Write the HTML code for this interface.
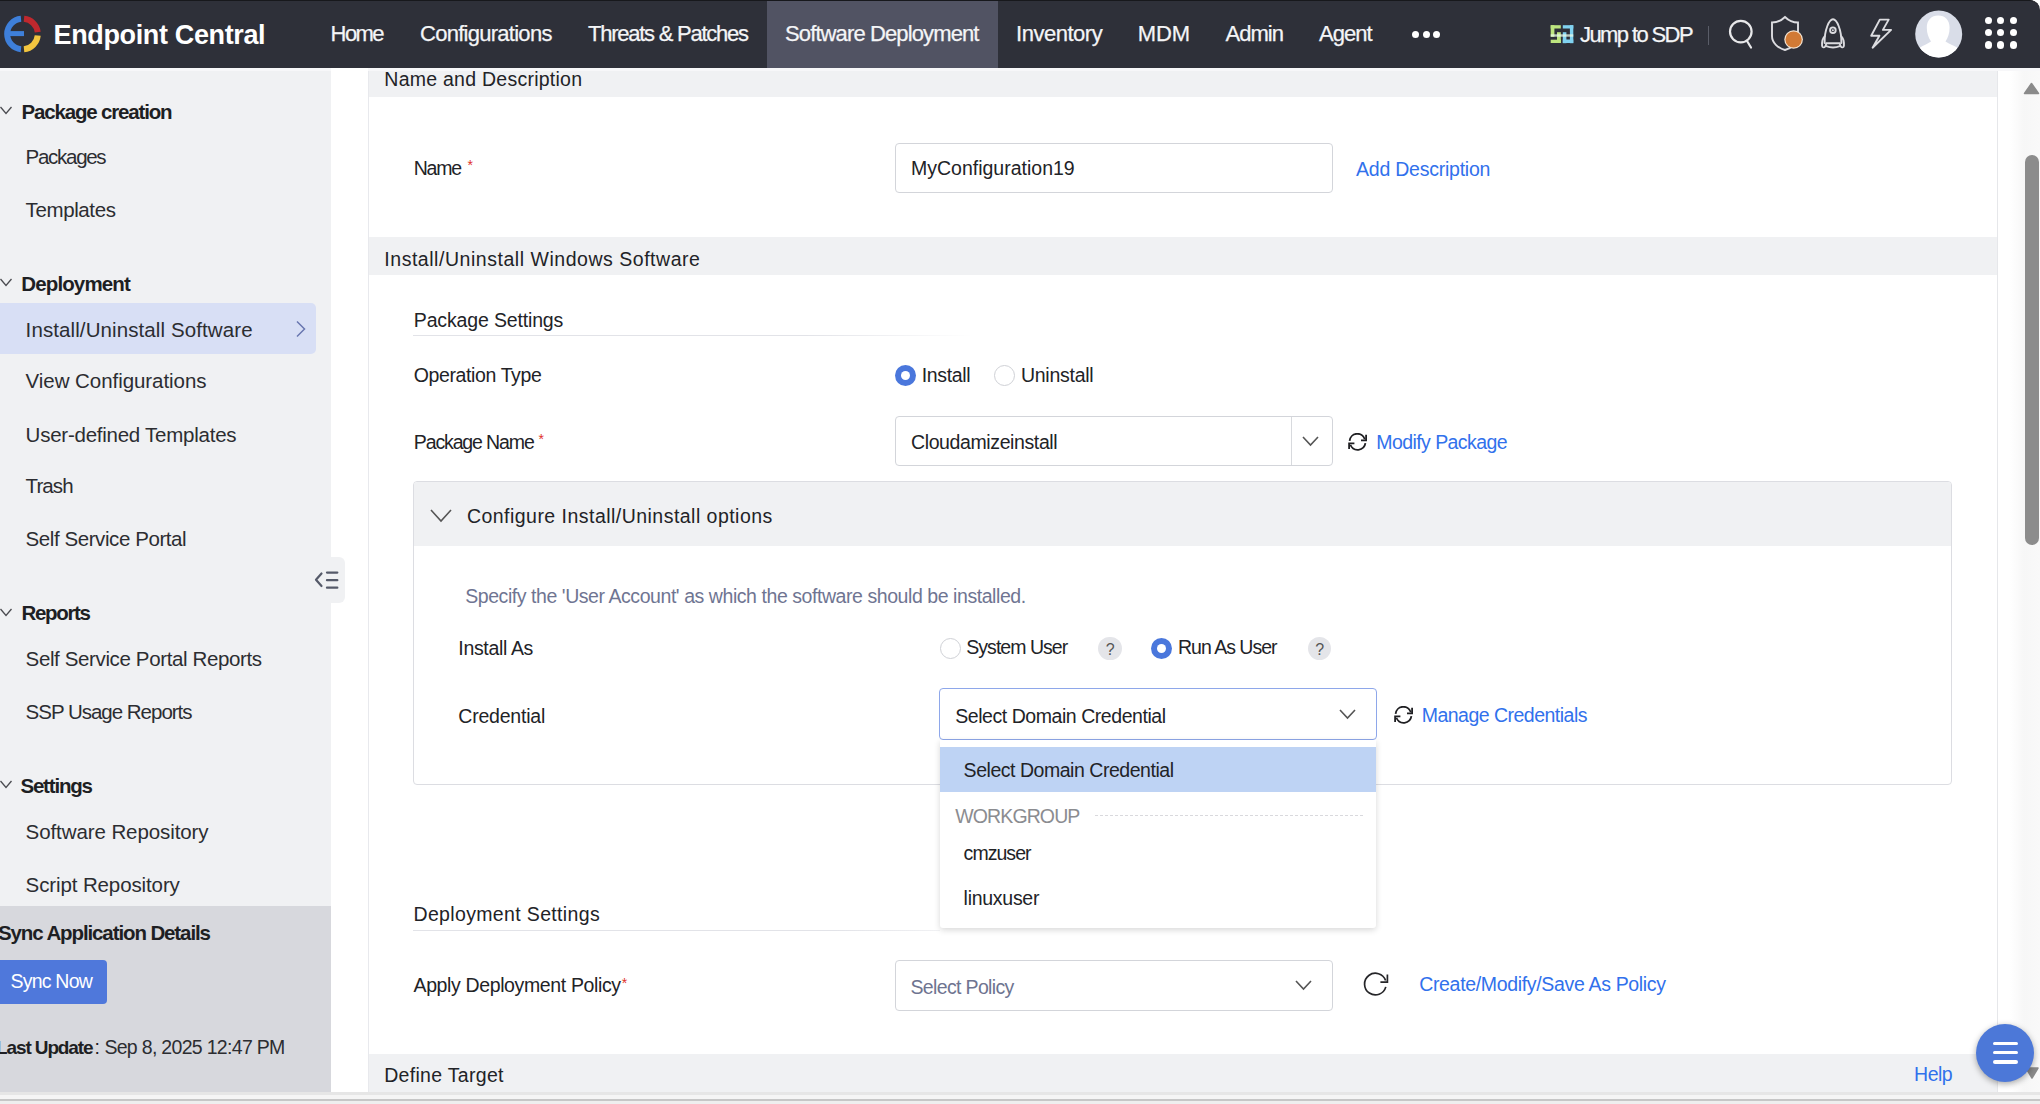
<!DOCTYPE html>
<html><head><meta charset="utf-8">
<style>
*{margin:0;padding:0;box-sizing:border-box}
html,body{width:2040px;height:1104px;overflow:hidden;background:#fff;font-family:"Liberation Sans",sans-serif;color:#222}
.t{position:absolute;white-space:nowrap;line-height:1.117}
.b{position:absolute}
</style></head><body>
<div class="b" style="left:0px;top:69px;width:331px;height:837px;background:#f0f1f3"></div>
<div class="b" style="left:0px;top:906px;width:331px;height:186px;background:#d7d8dd"></div>
<div class="b" style="left:368px;top:69px;width:1px;height:1023px;background:#e8e9ed"></div>
<div class="b" style="left:1997px;top:69px;width:1px;height:1023px;background:#e6e7ea"></div>
<div class="b" style="left:1998px;top:69px;width:42px;height:1023px;background:linear-gradient(90deg,#fff 0,#fff 12px,#f7f7f7 26px,#f9f9f9 100%)"></div>
<div class="b" style="left:369px;top:69px;width:1628px;height:28px;background:#f0f1f3"></div>
<div class="b" style="left:369px;top:237px;width:1628px;height:38px;background:#f0f1f3"></div>
<div class="b" style="left:369px;top:1054px;width:1628px;height:38px;background:#f0f1f3"></div>
<div class="b" style="left:0px;top:1092px;width:2040px;height:3px;background:#e6e6e6"></div>
<div class="b" style="left:0px;top:1095px;width:2040px;height:4px;background:#f5f5f5"></div>
<div class="b" style="left:0px;top:1099px;width:2040px;height:2px;background:#c6c6c6"></div>
<div class="b" style="left:0px;top:1101px;width:2040px;height:3px;background:#eeeeee"></div>
<div class="b" style="left:0px;top:0px;width:2040px;height:68px;background:#2e3039;border-top:1px solid #17181c;border-top-right-radius:10px"></div>
<div class="b" style="left:0px;top:68px;width:2040px;height:3px;background:#f7f7f9"></div>
<div class="b" style="left:331px;top:68px;width:37px;height:3px;background:#fff"></div>
<div class="b" style="left:767px;top:1px;width:231px;height:67px;background:#515363"></div>
<svg class="b" style="left:0;top:0" width="60" height="69" viewBox="0 0 60 69">
<g fill="none" stroke-width="6" stroke-linecap="butt">
<path d="M21 18.77 A15.3 15.3 0 0 0 21 49.23" stroke="#3e7fda"/>
<path d="M24 18.77 A15.3 15.3 0 0 1 37.73 32.2" stroke="#bf282e"/>
<path d="M37.73 35.5 A15.3 15.3 0 0 1 24 49.23" stroke="#f2c53f"/>
<path d="M10 33.6 H24" stroke="#3e7fda" stroke-width="5"/>
</g></svg>
<div class="t" style="left:53.60px;top:20.06px;font-size:27px;color:#ffffff;font-weight:bold;letter-spacing:-0.367px;">Endpoint Central</div>
<div class="t" style="left:330.60px;top:21.59px;font-size:22px;color:#f4f5f7;letter-spacing:-1.583px;-webkit-text-stroke:0.25px #f4f5f7;">Home</div>
<div class="t" style="left:420.00px;top:21.59px;font-size:22px;color:#f4f5f7;letter-spacing:-0.729px;-webkit-text-stroke:0.25px #f4f5f7;">Configurations</div>
<div class="t" style="left:588.00px;top:21.59px;font-size:22px;color:#f4f5f7;letter-spacing:-1.250px;-webkit-text-stroke:0.25px #f4f5f7;">Threats &amp; Patches</div>
<div class="t" style="left:785.00px;top:21.59px;font-size:22px;color:#f4f5f7;letter-spacing:-0.882px;-webkit-text-stroke:0.25px #f4f5f7;">Software Deployment</div>
<div class="t" style="left:1016.00px;top:21.59px;font-size:22px;color:#f4f5f7;letter-spacing:-0.475px;-webkit-text-stroke:0.25px #f4f5f7;">Inventory</div>
<div class="t" style="left:1137.70px;top:21.59px;font-size:22px;color:#f4f5f7;letter-spacing:-0.100px;-webkit-text-stroke:0.25px #f4f5f7;">MDM</div>
<div class="t" style="left:1225.60px;top:21.59px;font-size:22px;color:#f4f5f7;letter-spacing:-0.994px;-webkit-text-stroke:0.25px #f4f5f7;">Admin</div>
<div class="t" style="left:1319.00px;top:21.59px;font-size:22px;color:#f4f5f7;letter-spacing:-0.975px;-webkit-text-stroke:0.25px #f4f5f7;">Agent</div>
<div class="b" style="left:1412.0px;top:31px;width:7px;height:7px;border-radius:50%;background:#fff"></div>
<div class="b" style="left:1422.5px;top:31px;width:7px;height:7px;border-radius:50%;background:#fff"></div>
<div class="b" style="left:1433.0px;top:31px;width:7px;height:7px;border-radius:50%;background:#fff"></div>
<svg class="b" style="left:1544px;top:18px" width="40" height="32" viewBox="0 0 40 32">
<g fill="#bde57f"><rect x="6.7" y="7.2" width="10.1" height="3.3"/><rect x="6.7" y="7.2" width="3.7" height="11.6"/><rect x="13" y="14.2" width="3.8" height="10.8"/><rect x="6.7" y="21.7" width="10.1" height="3.3"/></g>
<g fill="#80d2f0"><rect x="18.8" y="7.2" width="10.5" height="3.3"/><rect x="25.9" y="7.2" width="3.4" height="18"/><rect x="18.8" y="14.2" width="3.6" height="11"/><rect x="18.8" y="21.5" width="10.5" height="3.5"/></g>
<rect x="6.7" y="16.3" width="22.6" height="2.4" fill="#eafbe8" opacity="0.75"/>
</svg>
<div class="t" style="left:1580.00px;top:22.59px;font-size:22px;color:#f4f5f7;letter-spacing:-1.603px;-webkit-text-stroke:0.25px #f4f5f7;">Jump to SDP</div>
<div class="b" style="left:1708px;top:26px;width:1px;height:19px;background:#5a5d68"></div>
<svg class="b" style="left:1726px;top:17px" width="32" height="34" viewBox="0 0 32 34">
<circle cx="14.8" cy="14.6" r="10.8" stroke="#e8e8ea" stroke-width="2.2" fill="none"/>
<path d="M21 24 L25 30.5" stroke="#e8e8ea" stroke-width="2.2" stroke-linecap="round"/>
</svg>
<svg class="b" style="left:1768px;top:14px" width="40" height="40" viewBox="0 0 40 40">
<path d="M17 3 C13 7 8 8.5 4 8.5 V22 C4 29 10 34 17 36 C24 34 30 29 30 22 V8.5 C26 8.5 21 7 17 3 Z" stroke="#dcdce0" stroke-width="1.9" fill="none"/>
<circle cx="25.6" cy="25.5" r="9.3" fill="#f3e3d2"/><circle cx="25.6" cy="25.5" r="8.1" fill="#d17a35"/>
</svg>
<svg class="b" style="left:1818px;top:15px" width="30" height="36" viewBox="0 0 30 36">
<g fill="none" stroke="#dcdce0" stroke-width="1.9" stroke-linecap="round" stroke-linejoin="round">
<path d="M6.6 28 C6.3 15 11.2 4.3 15 4.3 C18.8 4.3 23.7 15 23.4 28"/>
<circle cx="14.9" cy="15.2" r="2.8"/>
<path d="M6.6 21.5 C4.6 23.5 3.8 27 4.1 31 C4.3 32.8 6.3 32.8 7.2 31.5 L8.2 29"/>
<path d="M23.4 21.5 C25.4 23.5 26.2 27 25.9 31 C25.7 32.8 23.7 32.8 22.8 31.5 L21.8 29"/>
<path d="M8.2 28.3 H21.8 M8.2 31.2 C12 32.6 18 32.6 21.8 31.2"/>
</g>
<circle cx="14.9" cy="15.2" r="1" fill="#dcdce0"/>
</svg>
<svg class="b" style="left:1866px;top:15px" width="30" height="36" viewBox="0 0 30 36">
<path d="M13.8 4.6 H22.7 L16.9 14.9 H25.1 L6.6 32.7 L13.4 20.7 H5.2 Z" stroke="#dcdce0" stroke-width="1.9" fill="none" stroke-linejoin="round"/>
</svg>
<svg class="b" style="left:1914px;top:10px" width="50" height="50" viewBox="0 0 50 50">
<defs><filter id="bl" x="-10%" y="-10%" width="120%" height="120%"><feGaussianBlur stdDeviation="0.6"/></filter><clipPath id="ac"><circle cx="24.7" cy="24" r="23.5"/></clipPath></defs>
<circle cx="24.7" cy="24" r="23.5" fill="#d9dde8"/>
<g clip-path="url(#ac)" fill="#fff">
<path d="M24.2 5.4 C17.5 5.4 12.8 10 12.8 17.5 C12.8 23.5 14.5 27.5 17 31.5 C13 34 9.5 35.5 6 37.5 L3 52 H46 L43 37.5 C39.5 35.5 35.5 34 31.5 31.5 C34 27.5 35.6 23.5 35.6 17.5 C35.6 10 31 5.4 24.2 5.4 Z" filter="url(#bl)"/>
</g></svg>
<div class="b" style="left:1984.5px;top:16.5px;width:7.4px;height:7.4px;border-radius:50%;background:#fff"></div>
<div class="b" style="left:1997.1px;top:16.5px;width:7.4px;height:7.4px;border-radius:50%;background:#fff"></div>
<div class="b" style="left:2009.7px;top:16.5px;width:7.4px;height:7.4px;border-radius:50%;background:#fff"></div>
<div class="b" style="left:1984.5px;top:28.9px;width:7.4px;height:7.4px;border-radius:50%;background:#fff"></div>
<div class="b" style="left:1997.1px;top:28.9px;width:7.4px;height:7.4px;border-radius:50%;background:#fff"></div>
<div class="b" style="left:2009.7px;top:28.9px;width:7.4px;height:7.4px;border-radius:50%;background:#fff"></div>
<div class="b" style="left:1984.5px;top:41.3px;width:7.4px;height:7.4px;border-radius:50%;background:#fff"></div>
<div class="b" style="left:1997.1px;top:41.3px;width:7.4px;height:7.4px;border-radius:50%;background:#fff"></div>
<div class="b" style="left:2009.7px;top:41.3px;width:7.4px;height:7.4px;border-radius:50%;background:#fff"></div>
<svg class="b" style="left:-0.5px;top:106.4px" width="16" height="10" viewBox="0 0 16 10"><path d="M0.5 1 L6 7.5 L11.5 1" stroke="#4a4b50" stroke-width="1.3" fill="none"/></svg>
<div class="t" style="left:21.60px;top:100.95px;font-size:20.5px;color:#1e1f23;font-weight:bold;letter-spacing:-1.175px;">Package creation</div>
<svg class="b" style="left:-0.5px;top:278.3px" width="16" height="10" viewBox="0 0 16 10"><path d="M0.5 1 L6 7.5 L11.5 1" stroke="#4a4b50" stroke-width="1.3" fill="none"/></svg>
<div class="t" style="left:21.30px;top:272.95px;font-size:20.5px;color:#1e1f23;font-weight:bold;letter-spacing:-0.875px;">Deployment</div>
<svg class="b" style="left:-0.5px;top:607.7px" width="16" height="10" viewBox="0 0 16 10"><path d="M0.5 1 L6 7.5 L11.5 1" stroke="#4a4b50" stroke-width="1.3" fill="none"/></svg>
<div class="t" style="left:21.60px;top:601.95px;font-size:20.5px;color:#1e1f23;font-weight:bold;letter-spacing:-1.367px;">Reports</div>
<svg class="b" style="left:-0.5px;top:780.2px" width="16" height="10" viewBox="0 0 16 10"><path d="M0.5 1 L6 7.5 L11.5 1" stroke="#4a4b50" stroke-width="1.3" fill="none"/></svg>
<div class="t" style="left:20.40px;top:774.95px;font-size:20.5px;color:#1e1f23;font-weight:bold;letter-spacing:-1.182px;">Settings</div>
<div class="b" style="left:0px;top:303px;width:316px;height:51px;background:#d8dff5;border-radius:0 5px 5px 0"></div>
<svg class="b" style="left:295px;top:320px" width="12" height="18" viewBox="0 0 12 18"><path d="M2 1.5 L9.5 9 L2 16.5" stroke="#6977b0" stroke-width="1.5" fill="none"/></svg>
<div class="t" style="left:25.60px;top:145.95px;font-size:20.5px;color:#2c2d31;letter-spacing:-1.286px;">Packages</div>
<div class="t" style="left:25.60px;top:198.95px;font-size:20.5px;color:#2c2d31;letter-spacing:-0.384px;">Templates</div>
<div class="t" style="left:25.60px;top:318.95px;font-size:20.5px;color:#2c2d31;letter-spacing:0.100px;">Install/Uninstall Software</div>
<div class="t" style="left:25.60px;top:369.95px;font-size:20.5px;color:#2c2d31;letter-spacing:-0.056px;">View Configurations</div>
<div class="t" style="left:25.60px;top:423.95px;font-size:20.5px;color:#2c2d31;letter-spacing:-0.244px;">User-defined Templates</div>
<div class="t" style="left:25.60px;top:474.95px;font-size:20.5px;color:#2c2d31;letter-spacing:-0.906px;">Trash</div>
<div class="t" style="left:25.60px;top:527.95px;font-size:20.5px;color:#2c2d31;letter-spacing:-0.424px;">Self Service Portal</div>
<div class="t" style="left:25.60px;top:647.95px;font-size:20.5px;color:#2c2d31;letter-spacing:-0.370px;">Self Service Portal Reports</div>
<div class="t" style="left:25.60px;top:700.95px;font-size:20.5px;color:#2c2d31;letter-spacing:-1.008px;">SSP Usage Reports</div>
<div class="t" style="left:25.60px;top:820.95px;font-size:20.5px;color:#2c2d31;letter-spacing:-0.090px;">Software Repository</div>
<div class="t" style="left:25.60px;top:873.95px;font-size:20.5px;color:#2c2d31;letter-spacing:-0.114px;">Script Repository</div>
<div class="b" style="left:320px;top:557px;width:24.5px;height:46px;background:#f0f1f3;border-radius:0 6px 6px 0"></div>
<svg class="b" style="left:310px;top:565px" width="34" height="30" viewBox="0 0 34 30">
<path d="M11.5 8.5 L6 14.8 L11.5 21" stroke="#555a69" stroke-width="2.2" fill="none" stroke-linecap="round" stroke-linejoin="round"/>
<path d="M17 7.6 H27.3 M17 15.2 H27.3 M17 22.7 H27.3" stroke="#555a69" stroke-width="2.3" stroke-linecap="round"/>
</svg>
<div class="t" style="left:-2.00px;top:921.95px;font-size:20.5px;color:#1e1f23;font-weight:bold;letter-spacing:-1.109px;">Sync Application Details</div>
<div class="b" style="left:0px;top:960px;width:107px;height:43.5px;background:#4f78db;border-radius:0 4px 4px 0"></div>
<div class="t" style="left:10.50px;top:970.85px;font-size:19.5px;color:#ffffff;letter-spacing:-0.786px;">Sync Now</div>
<div class="t" style="left:-4.00px;top:1037.31px;font-size:19px;color:#1e1f23;font-weight:bold;letter-spacing:-1.115px;">Last Update</div>
<div class="t" style="left:94.60px;top:1036.85px;font-size:19.5px;color:#1e1f23;">:</div>
<div class="t" style="left:104.40px;top:1036.85px;font-size:19.5px;color:#2c2d31;letter-spacing:-0.691px;">Sep 8, 2025 12:47 PM</div>
<div class="t" style="left:384.30px;top:68.85px;font-size:19.5px;color:#222327;letter-spacing:0.254px;">Name and Description</div>
<div class="t" style="left:384.30px;top:248.85px;font-size:19.5px;color:#222327;letter-spacing:0.533px;">Install/Uninstall Windows Software</div>
<div class="t" style="left:384.20px;top:1064.85px;font-size:19.5px;color:#222327;letter-spacing:0.306px;">Define Target</div>
<div class="t" style="left:413.80px;top:157.85px;font-size:19.5px;color:#222327;letter-spacing:-1.267px;">Name</div>
<div class="t" style="left:467.50px;top:157.83px;font-size:14px;color:#e0302a;">*</div>
<div class="b" style="left:895px;top:143px;width:438px;height:50px;border:1px solid #d3d5da;border-radius:4px;background:#fff"></div>
<div class="t" style="left:911.00px;top:157.85px;font-size:19.5px;color:#222327;">MyConfiguration19</div>
<div class="t" style="left:1356.00px;top:158.85px;font-size:19.5px;color:#3171ec;letter-spacing:-0.230px;">Add Description</div>
<div class="t" style="left:413.80px;top:309.85px;font-size:19.5px;color:#222327;letter-spacing:-0.150px;">Package Settings</div>
<div class="b" style="left:413px;top:335px;width:560px;height:1px;background:linear-gradient(90deg,#e2e3e8 0,#e2e3e8 70%,rgba(226,227,232,0) 100%)"></div>
<div class="t" style="left:413.80px;top:364.85px;font-size:19.5px;color:#222327;letter-spacing:-0.385px;">Operation Type</div>
<div class="b" style="left:894.8px;top:364.5px;width:21px;height:21px;border-radius:50%;background:#4a77dc"></div>
<div class="b" style="left:900.8px;top:370.5px;width:9px;height:9px;border-radius:50%;background:#fff"></div>
<div class="t" style="left:921.70px;top:364.85px;font-size:19.5px;color:#222327;letter-spacing:-0.350px;">Install</div>
<div class="b" style="left:993.9px;top:364.5px;width:21px;height:21px;border-radius:50%;background:#fff;border:1px solid #cfd1d6"></div>
<div class="t" style="left:1020.90px;top:364.85px;font-size:19.5px;color:#222327;letter-spacing:-0.256px;">Uninstall</div>
<div class="t" style="left:413.80px;top:431.85px;font-size:19.5px;color:#222327;letter-spacing:-1.125px;">Package Name</div>
<div class="t" style="left:538.50px;top:431.83px;font-size:14px;color:#e0302a;">*</div>
<div class="b" style="left:895px;top:416px;width:438px;height:50px;border:1px solid #d3d5da;border-radius:4px;background:#fff"></div>
<div class="b" style="left:1291px;top:417px;width:1px;height:48px;background:#d8dade"></div>
<svg class="b" style="left:1302px;top:436px" width="17" height="11" viewBox="0 0 17 11"><path d="M1 1 L8.5 9 L16 1" stroke="#555" stroke-width="1.6" fill="none"/></svg>
<div class="t" style="left:911.00px;top:431.85px;font-size:19.5px;color:#222327;letter-spacing:-0.386px;">Cloudamizeinstall</div>
<svg class="b" style="left:1348.2px;top:433.2px" width="20" height="18" viewBox="0 0 20 18">
<g fill="none" stroke="#1f1f22" stroke-width="1.8">
<path d="M1.6 7.8 A7.8 7.8 0 0 1 16.8 6.2"/>
<path d="M18.1 1.8 V7.4 H13"/>
<path d="M17.4 10.2 A7.8 7.8 0 0 1 2.4 11.8"/>
<path d="M1.1 15.9 V10.3 H6.4"/>
</g></svg>
<div class="t" style="left:1376.30px;top:431.85px;font-size:19.5px;color:#3171ec;letter-spacing:-0.573px;">Modify Package</div>
<div class="b" style="left:413px;top:481px;width:1539px;height:304px;border:1px solid #dcdde2;border-radius:4px;background:#fff"></div>
<div class="b" style="left:414px;top:482px;width:1537px;height:64px;background:#f0f1f3;border-radius:3px 3px 0 0"></div>
<svg class="b" style="left:430px;top:509px" width="22" height="14" viewBox="0 0 22 14"><path d="M1 1 L11.0 12 L21 1" stroke="#555" stroke-width="1.6" fill="none"/></svg>
<div class="t" style="left:466.90px;top:505.85px;font-size:19.5px;color:#222327;letter-spacing:0.471px;">Configure Install/Uninstall options</div>
<div class="t" style="left:465.20px;top:585.85px;font-size:19.5px;color:#6f7592;letter-spacing:-0.436px;">Specify the 'User Account' as which the software should be installed.</div>
<div class="t" style="left:458.30px;top:637.85px;font-size:19.5px;color:#222327;letter-spacing:-0.333px;">Install As</div>
<div class="t" style="left:458.30px;top:705.85px;font-size:19.5px;color:#222327;letter-spacing:-0.208px;">Credential</div>
<div class="b" style="left:939.5px;top:638.1px;width:21px;height:21px;border-radius:50%;background:#fff;border:1px solid #cfd1d6"></div>
<div class="t" style="left:966.30px;top:636.85px;font-size:19.5px;color:#222327;letter-spacing:-0.972px;">System User</div>
<div class="b" style="left:1098.3px;top:636.5999999999999px;width:23.4px;height:23.4px;border-radius:50%;background:#e4e5e9"></div>
<div class="t" style="left:1105.70px;top:641.02px;font-size:16px;color:#555;">?</div>
<div class="b" style="left:1151.4px;top:638.1px;width:21px;height:21px;border-radius:50%;background:#4a77dc"></div>
<div class="b" style="left:1157.4px;top:644.1px;width:9px;height:9px;border-radius:50%;background:#fff"></div>
<div class="t" style="left:1178.00px;top:636.85px;font-size:19.5px;color:#222327;letter-spacing:-0.990px;">Run As User</div>
<div class="b" style="left:1307.8px;top:636.5999999999999px;width:23.4px;height:23.4px;border-radius:50%;background:#e4e5e9"></div>
<div class="t" style="left:1315.20px;top:641.02px;font-size:16px;color:#555;">?</div>
<div class="b" style="left:939px;top:688px;width:438px;height:52px;border:1px solid #8ea7ea;border-radius:4px;background:#fff"></div>
<div class="t" style="left:955.30px;top:705.85px;font-size:19.5px;color:#222327;letter-spacing:-0.453px;">Select Domain Credential</div>
<svg class="b" style="left:1338.5px;top:709px" width="17" height="11" viewBox="0 0 17 11"><path d="M1 1 L8.5 9 L16 1" stroke="#555" stroke-width="1.6" fill="none"/></svg>
<svg class="b" style="left:1393.6px;top:705.8px" width="20" height="18" viewBox="0 0 20 18">
<g fill="none" stroke="#1f1f22" stroke-width="1.8">
<path d="M1.6 7.8 A7.8 7.8 0 0 1 16.8 6.2"/>
<path d="M18.1 1.8 V7.4 H13"/>
<path d="M17.4 10.2 A7.8 7.8 0 0 1 2.4 11.8"/>
<path d="M1.1 15.9 V10.3 H6.4"/>
</g></svg>
<div class="t" style="left:1421.70px;top:704.85px;font-size:19.5px;color:#3171ec;letter-spacing:-0.512px;">Manage Credentials</div>
<div class="b" style="left:940px;top:740px;width:436px;height:188px;background:#fff;box-shadow:0 2px 6px rgba(0,0,0,0.16);border-radius:0 0 3px 3px"></div>
<div class="b" style="left:940px;top:747px;width:436px;height:45px;background:#bed3f4"></div>
<div class="t" style="left:963.60px;top:759.85px;font-size:19.5px;color:#222327;letter-spacing:-0.466px;">Select Domain Credential</div>
<div class="t" style="left:955.30px;top:805.85px;font-size:19.5px;color:#8b8c90;letter-spacing:-0.891px;">WORKGROUP</div>
<div class="b" style="left:1095px;top:815px;width:268px;height:1px;background:repeating-linear-gradient(90deg,#d9d9dd 0,#d9d9dd 3px,transparent 3px,transparent 5px)"></div>
<div class="t" style="left:963.60px;top:842.85px;font-size:19.5px;color:#222327;letter-spacing:-0.954px;">cmzuser</div>
<div class="t" style="left:963.60px;top:887.85px;font-size:19.5px;color:#222327;letter-spacing:-0.275px;">linuxuser</div>
<div class="t" style="left:413.50px;top:903.85px;font-size:19.5px;color:#222327;letter-spacing:0.346px;">Deployment Settings</div>
<div class="b" style="left:413px;top:930px;width:527px;height:1px;background:linear-gradient(90deg,#e2e3e8 0,#e2e3e8 80%,rgba(226,227,232,0.5) 100%)"></div>
<div class="t" style="left:413.50px;top:974.85px;font-size:19.5px;color:#222327;letter-spacing:-0.369px;">Apply Deployment Policy</div>
<div class="t" style="left:621.80px;top:975.83px;font-size:14px;color:#e0302a;">*</div>
<div class="b" style="left:895px;top:960px;width:438px;height:51px;border:1px solid #d3d5da;border-radius:4px;background:#fff"></div>
<div class="t" style="left:910.50px;top:976.85px;font-size:19.5px;color:#6e7490;letter-spacing:-0.652px;">Select Policy</div>
<svg class="b" style="left:1294.5px;top:980px" width="17" height="11" viewBox="0 0 17 11"><path d="M1 1 L8.5 9 L16 1" stroke="#555" stroke-width="1.6" fill="none"/></svg>
<svg class="b" style="left:1355px;top:965px" width="40" height="40" viewBox="0 0 40 40">
<g fill="none" stroke="#262629" stroke-width="1.7">
<path d="M30.8 21.9 A10.8 10.8 0 1 1 30.6 15.6"/>
<path d="M32.4 9.4 V17.2 H25.4"/>
</g></svg>
<div class="t" style="left:1419.20px;top:973.85px;font-size:19.5px;color:#3171ec;letter-spacing:-0.331px;">Create/Modify/Save As Policy</div>
<div class="t" style="left:1914.10px;top:1063.85px;font-size:19.5px;color:#3171ec;letter-spacing:-0.542px;">Help</div>
<svg class="b" style="left:2023px;top:82px" width="17" height="13" viewBox="0 0 17 13"><path d="M8.5 1.5 L15.5 11.5 H1.5 Z" fill="#8a8a8a" stroke="#8a8a8a" stroke-width="1.5" stroke-linejoin="round"/></svg>
<div class="b" style="left:2025px;top:155px;width:14px;height:390px;background:#8c8c8c;border-radius:7px"></div>
<svg class="b" style="left:2024px;top:1066px" width="16" height="14" viewBox="0 0 16 14"><path d="M2 2 H14 L8 12 Z" fill="#8a8a8a" stroke="#8a8a8a" stroke-width="1.5" stroke-linejoin="round"/></svg>
<div class="b" style="left:1976px;top:1024px;width:58px;height:58px;border-radius:50%;background:#4c78d8;box-shadow:0 2px 6px rgba(0,0,0,0.35)"></div>
<div class="b" style="left:1992.5px;top:1041.5px;width:25px;height:3.4px;background:#fff;border-radius:2px"></div>
<div class="b" style="left:1992.5px;top:1050.9px;width:25px;height:3.4px;background:#fff;border-radius:2px"></div>
<div class="b" style="left:1992.5px;top:1060.3px;width:25px;height:3.4px;background:#fff;border-radius:2px"></div>
</body></html>
